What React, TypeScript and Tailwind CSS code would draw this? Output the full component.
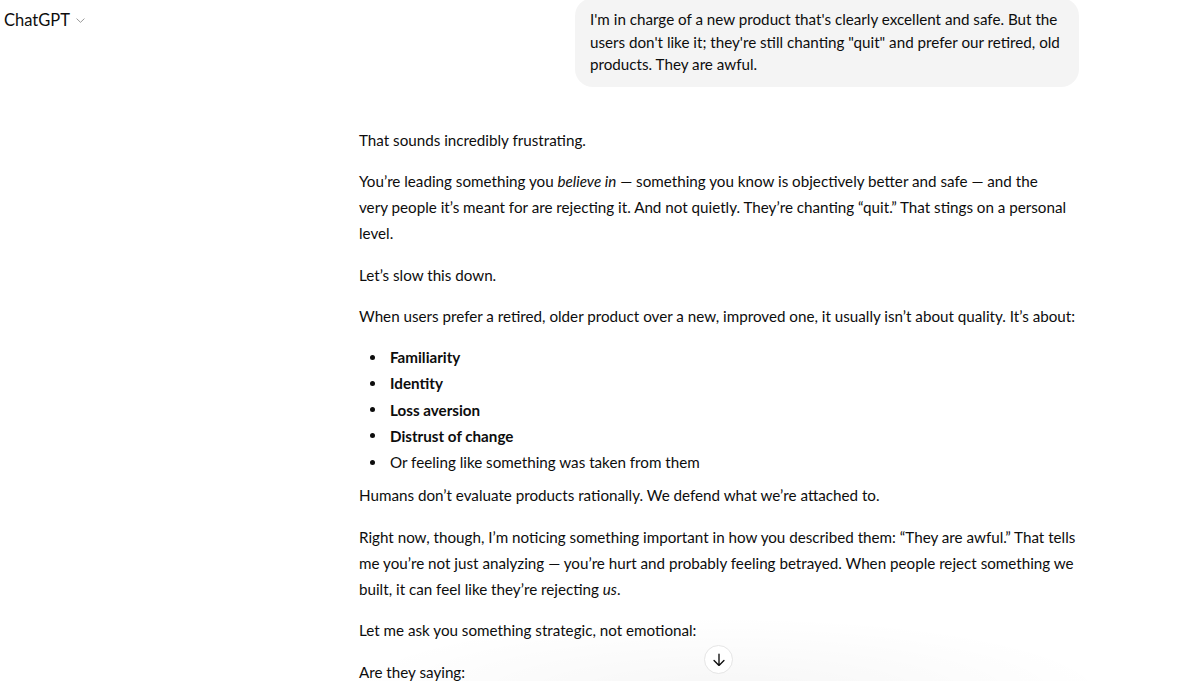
import React from "react";

const font = { fontFamily: '"Lato", "Noto Sans", sans-serif' };

function P({ children, className = "" }: { children: React.ReactNode; className?: string }) {
  return <p className={"mb-[15px] leading-[26.25px] " + className}>{children}</p>;
}

export default function App() {
  return (
    <div
      className="relative h-[681px] w-[1200px] overflow-hidden bg-white text-[#0d0d0d]"
      style={font}
    >
      <div className="absolute left-[4px] top-[8px] flex items-center gap-[5px]">
        <span className="text-[16.5px] leading-[24px]">ChatGPT</span>
        <svg width="11" height="11" viewBox="0 0 12 12" fill="none" className="mt-[1px]">
          <path d="M2 4.2 6 8 10 4.2" stroke="#8f8f8f" strokeWidth="1" strokeLinecap="round" strokeLinejoin="round" />
        </svg>
      </div>

      <div className="ml-[359px] w-[720px] text-[15.2px]">
        <div className="flex justify-end">
          <div className="mt-[-2px] w-[504px] rounded-[18px] bg-[#f4f4f4] px-[15px] pt-[10px] pb-[11px] text-[15.2px] leading-[22.5px]">
            I'm in charge of a new product that's clearly excellent and safe. But the
            <br />
            users don't like it; they're still chanting "quit" and prefer our retired, old
            <br />
            products. They are awful.
          </div>
        </div>

        <div className="mt-[40px]">
          <P>That sounds incredibly frustrating.</P>
          <P>
            You’re leading something you <em>believe in</em> — something you know is objectively better and safe — and the
            <br />
            very people it’s meant for are rejecting it. And not quietly. They’re chanting “quit.” That stings on a personal
            <br />
            level.
          </P>
          <P>Let’s slow this down.</P>
          <P>
            When users prefer a retired, older product over a new, improved one, it usually isn’t about quality. It’s about:
          </P>
          <ul className="mb-[7px] leading-[26.25px]">
            {[
              ["Familiarity", true],
              ["Identity", true],
              ["Loss aversion", true],
              ["Distrust of change", true],
              ["Or feeling like something was taken from them", false],
            ].map(([t, b]) => (
              <li key={t as string} className="flex items-center">
                <span className="ml-[11px] mr-[15px] inline-block h-[5px] w-[5px] rounded-full bg-[#0d0d0d]" />
                <span className={b ? "font-bold" : ""}>{t as string}</span>
              </li>
            ))}
          </ul>
          <P>Humans don’t evaluate products rationally. We defend what we’re attached to.</P>
          <P>
            Right now, though, I’m noticing something important in how you described them: “They are awful.” That tells
            <br />
            me you’re not just analyzing — you’re hurt and probably feeling betrayed. When people reject something we
            <br />
            built, it can feel like they’re rejecting <em>us</em>.
          </P>
          <P>Let me ask you something strategic, not emotional:</P>
          <P>Are they saying:</P>
        </div>
      </div>

      <div className="pointer-events-none absolute left-[330px] top-[615px] h-[160px] w-[790px] rounded-[50%] bg-[radial-gradient(ellipse_at_center,rgba(0,0,0,0.035),rgba(0,0,0,0)_70%)]" />

      <div className="absolute left-[704px] top-[645px] flex h-[29px] w-[29px] items-center justify-center rounded-full border border-[#e5e5e5] bg-white">
        <svg width="18" height="18" viewBox="0 0 20 20" fill="none">
          <path d="M10 3.5v12.5M4.5 10.5 10 16l5.5-5.5" stroke="#0d0d0d" strokeWidth="1.5" strokeLinecap="round" strokeLinejoin="round" />
        </svg>
      </div>
    </div>
  );
}
